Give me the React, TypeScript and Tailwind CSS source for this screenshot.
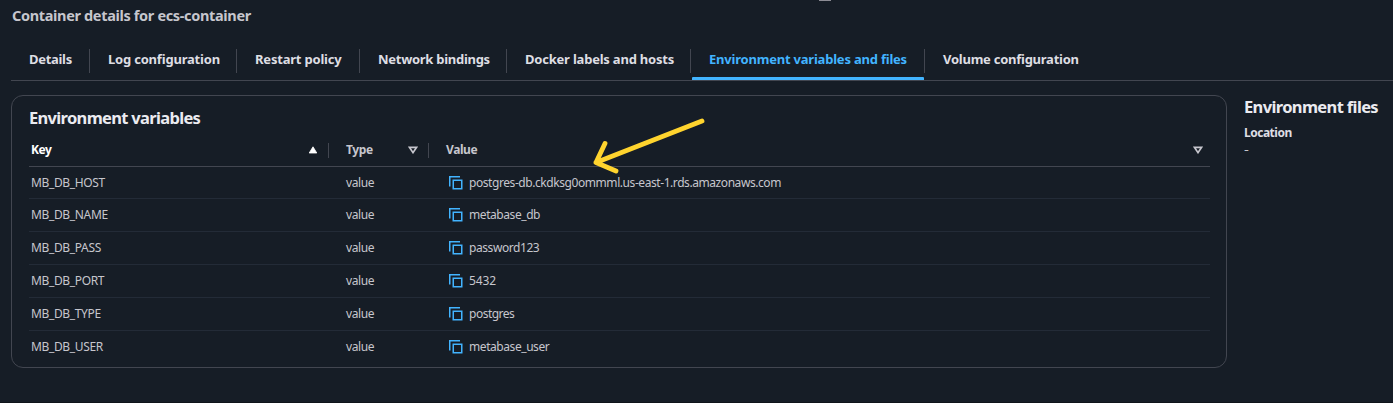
import clsx from 'clsx';

type Tab = { label: string; width: string; tracking: string; active?: boolean };

const tabs: Tab[] = [
  { label: 'Details', width: 'w-[79px] pl-[18px]', tracking: 'tracking-[-0.3px]' },
  { label: 'Log configuration', width: 'w-[147px] pl-[18px]', tracking: 'tracking-[-0.2px]' },
  { label: 'Restart policy', width: 'w-[123px] pl-[18px]', tracking: 'tracking-[-0.2px]' },
  { label: 'Network bindings', width: 'w-[147px] pl-[18px]', tracking: 'tracking-[-0.28px]' },
  { label: 'Docker labels and hosts', width: 'w-[184px] pl-[18px]', tracking: 'tracking-[-0.21px]' },
  { label: 'Environment variables and files', width: 'w-[234px] pl-[18px]', tracking: 'tracking-[-0.21px]', active: true },
  { label: 'Volume configuration', width: 'w-[200px] pl-[18px]', tracking: 'tracking-[-0.25px]' },
];

const rows = [
  { name: 'MB_DB_HOST', value: 'postgres-db.ckdksg0ommml.us-east-1.rds.amazonaws.com', height: 'h-8', tracking: 'tracking-[-0.43px]' },
  { name: 'MB_DB_NAME', value: 'metabase_db', height: 'h-[33px]', tracking: 'tracking-[-0.43px]' },
  { name: 'MB_DB_PASS', value: 'password123', height: 'h-[33px]', tracking: 'tracking-[-0.43px]' },
  { name: 'MB_DB_PORT', value: '5432', height: 'h-[33px]', tracking: 'tracking-[-0.1px]' },
  { name: 'MB_DB_TYPE', value: 'postgres', height: 'h-[33px]', tracking: 'tracking-[-0.5px]' },
  { name: 'MB_DB_USER', value: 'metabase_user', height: 'h-8', tracking: 'tracking-[-0.43px]' },
];

function CopyIcon() {
  return (
    <svg width="14" height="14" viewBox="0 0 14 14" fill="none" stroke="#42b4ff" strokeWidth="1.5" className="shrink-0">
      <path d="M0.75 10.5V0.75H11" />
      <rect x="4.25" y="4.25" width="8.5" height="8.5" />
    </svg>
  );
}

function SortIcon({ sorted = false }: { sorted?: boolean }) {
  return (
    <svg width="10" height="8" viewBox="0 0 10 8" className="shrink-0">
      {sorted ? (
        <path d="M5 0.8 8.8 7H1.2Z" fill="#fff" stroke="#fff" strokeWidth="0.8" />
      ) : (
        <path d="M1.5 1.4H8.5L5 6.6Z" fill="none" stroke="#c6c6cd" strokeWidth="1.7" />
      )}
    </svg>
  );
}

export default function App() {
  return (
    <div className="relative h-[403px] w-[1393px] overflow-hidden border-b border-[#0f141a] bg-[#161d26] pl-[11px] font-['Noto_Sans','Open_Sans',sans-serif] text-[12px] text-[#c6c6cd]">
      <div className="absolute left-[819px] top-0 h-px w-3 bg-[#8c8c94]" />
      <h1 className="flex h-8 items-center pl-px text-[14.5px] font-bold tracking-[-0.34px]">Container details for ecs-container</h1>
      <nav className="flex h-[49px] border-b border-[#424650] pt-[17px]">
        {tabs.map((tab, i) => (
          <div key={tab.label} className={clsx('relative flex h-[31px] shrink-0', tab.width)}>
            <span
              className={clsx(
                'h-6 whitespace-nowrap text-[13px] font-bold leading-[21px]',
                tab.tracking,
                tab.active ? 'text-[#42b4ff]' : 'text-[#dedee3]',
              )}
            >
              {tab.label}
            </span>
            {i < tabs.length - 1 && <span className="absolute right-0 top-0 h-6 w-px bg-[#424650]" />}
            {tab.active && <span className="absolute bottom-0 left-px right-px h-[3px] rounded-t-[1px] bg-[#42b4ff]" />}
          </div>
        ))}
      </nav>
      <main className="flex gap-[17px] pt-[14px]">
        <section className="h-[273px] w-[1216px] rounded-xl border border-[#424650] pl-[17px] pr-4">
          <h2 className="h-[42px] pt-[11px] text-[16.5px] font-bold leading-[22px] tracking-[-0.68px] text-[#ebebf0]">
            Environment variables
          </h2>
          <div className="flex h-[29px] border-b border-[#424650] text-[12px] font-bold">
            <div className="flex h-6 w-[300px] items-center justify-between pl-0.5 pr-[11px] text-white">
              <span className="tracking-[-0.5px]">Key</span>
              <SortIcon sorted />
            </div>
            <div className="-ml-px mt-[5px] h-[15px] w-px bg-[#424650]" />
            <div className="flex h-6 w-[99px] items-center justify-between pl-[17px] pr-[10px]">
              <span className="tracking-[-0.4px]">Type</span>
              <SortIcon />
            </div>
            <div className="mt-[5px] h-[15px] w-px bg-[#424650]" />
            <div className="flex h-6 flex-1 items-center justify-between pl-[17px] pr-[7px]">
              <span className="tracking-[-0.4px]">Value</span>
              <SortIcon />
            </div>
          </div>
          {rows.map((row, i) => (
            <div key={row.name} className={clsx('flex items-center', row.height, i < rows.length - 1 && 'border-b border-[#232b37]')}>
              <span className="w-[317px] pl-0.5 tracking-[-0.35px]">{row.name}</span>
              <span className="w-[103px] tracking-[-0.4px]">value</span>
              <CopyIcon />
              <span className={clsx('pl-[6px]', row.tracking)}>{row.value}</span>
            </div>
          ))}
        </section>
        <aside>
          <h2 className="whitespace-nowrap text-[16.5px] font-bold leading-[24px] tracking-[-0.64px] text-[#ebebf0]">Environment files</h2>
          <h3 className="pt-[5px] text-[12px] font-bold leading-[18px] tracking-[-0.5px] text-[#dedee3]">Location</h3>
          <p className="origin-left scale-x-125 leading-[16px]">-</p>
        </aside>
      </main>
      <svg className="absolute left-[590px] top-[114px]" width="120" height="64" viewBox="590 114 120 64" fill="none" stroke="#ffd42e" strokeWidth="4.8" strokeLinecap="round" strokeLinejoin="round">
        <path d="M702 121 596 162.5M605 143.5 596 162.5 616 171" />
      </svg>
    </div>
  );
}
